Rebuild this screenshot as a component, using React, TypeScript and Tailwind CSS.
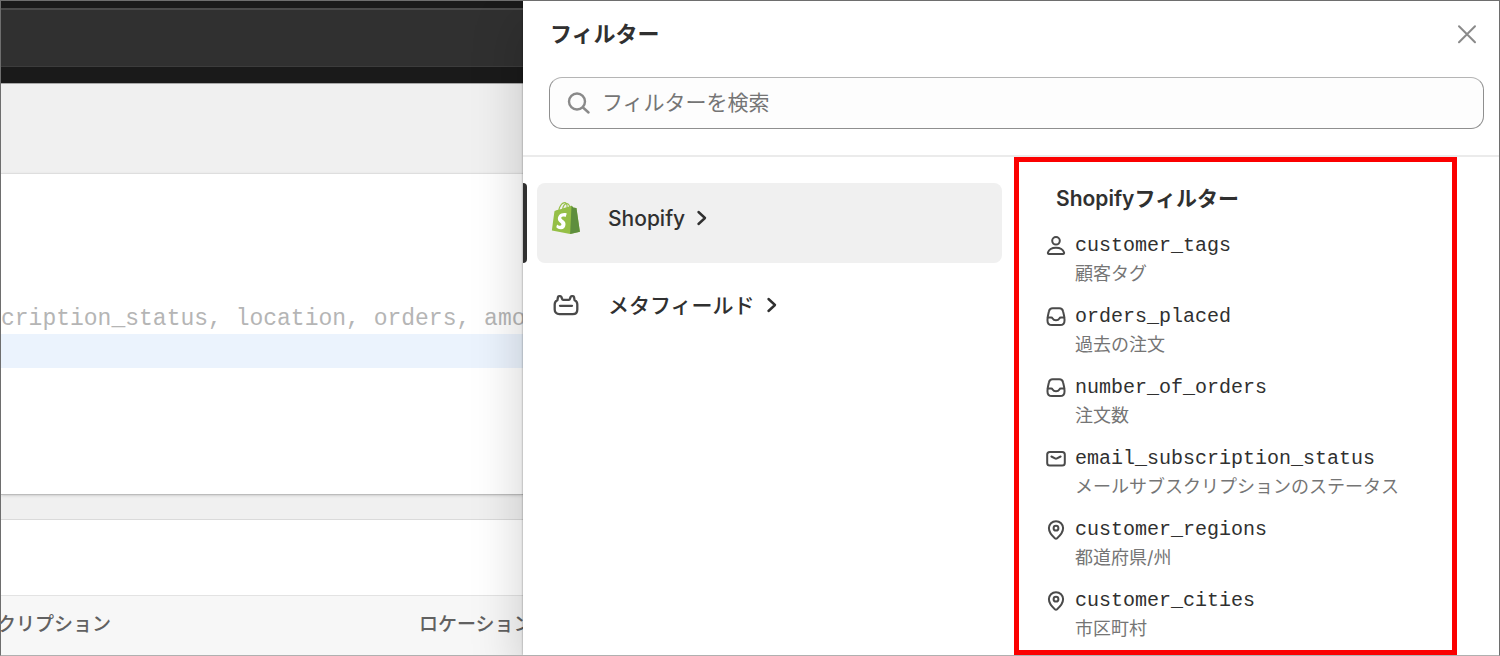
import type { ReactNode } from "react";

type IconProps = { className?: string };

function StrokeIcon({ className, children }: { className?: string; children: ReactNode }) {
  return (
    <svg
      viewBox="0 0 20 20"
      fill="none"
      stroke="currentColor"
      strokeWidth={2}
      strokeLinecap="round"
      strokeLinejoin="round"
      aria-hidden="true"
      className={className}
    >
      {children}
    </svg>
  );
}

function PersonIcon({ className }: IconProps) {
  return (
    <StrokeIcon className={className}>
      <circle cx="10" cy="4.800" r="3.800" />
      <path d="M1.900 16.600c1-3.200 4.300-4.900 8.100-4.900s7.100 1.700 8.100 4.900c.2.700-.3 1.300-1 1.300H2.900c-.7 0-1.200-.6-1-1.300Z" />
    </StrokeIcon>
  );
}

function InboxIcon({ className }: IconProps) {
  return (
    <StrokeIcon className={className}>
      <path d="M6.600 1.300h6.800c1.800 0 3.200 1.100 3.600 2.900.9 3.500 1.500 5.600 1.500 8v1.500c0 2.700-1.900 4.400-4.500 4.400H6c-2.600 0-4.500-1.700-4.500-4.400v-1.500c0-2.400.6-4.500 1.500-8 .4-1.800 1.800-2.900 3.600-2.900Z" />
      <path d="M1.800 10.600h3.500c.6 0 1 .3 1.300.8.7 1.200 1.900 1.900 3.400 1.900s2.700-.7 3.400-1.900c.3-.5.7-.8 1.300-.8h3.500" />
    </StrokeIcon>
  );
}

function MailIcon({ className }: IconProps) {
  return (
    <StrokeIcon className={className}>
      <rect x="1.200" y="3" width="17.600" height="13.600" rx="2.600" />
      <path d="M5.400 7.500 9 9.400c.6.300 1.400.300 2 0l3.600-1.900" />
    </StrokeIcon>
  );
}

function PinIcon({ className }: IconProps) {
  return (
    <StrokeIcon className={className}>
      <path d="M10 1.200c-4 0-7.100 3-7.100 6.900 0 4.300 3.300 7.900 6.200 10.300.5.500 1.300.500 1.800 0 2.900-2.400 6.200-6 6.200-10.300 0-3.900-3.100-6.900-7.100-6.900Z" />
      <circle cx="10" cy="8.200" r="2.400" />
    </StrokeIcon>
  );
}

function SearchIcon({ className }: IconProps) {
  return (
    <svg viewBox="0 0 24 24" fill="none" stroke="currentColor" strokeWidth={2.4} strokeLinecap="round" aria-hidden="true" className={className}>
      <circle cx="11" cy="10.500" r="8" />
      <path d="m17 16.500 5.500 5" />
    </svg>
  );
}

function CloseIcon({ className }: IconProps) {
  return (
    <svg viewBox="0 0 20 20" fill="none" stroke="currentColor" strokeWidth={2} strokeLinecap="round" aria-hidden="true" className={className}>
      <path d="m2 2.300 16 16M18 2.300 2 18.300" />
    </svg>
  );
}

function ChevronIcon({ className }: IconProps) {
  return (
    <svg viewBox="0 0 12 18" fill="none" stroke="currentColor" strokeWidth={2.4} strokeLinecap="round" strokeLinejoin="round" aria-hidden="true" className={className}>
      <path d="m2.500 3 6.500 6-6.500 6" />
    </svg>
  );
}

function MetafieldIcon({ className }: IconProps) {
  return (
    <svg viewBox="0 0 32 32" fill="none" stroke="currentColor" strokeWidth={2.3} strokeLinecap="round" strokeLinejoin="round" aria-hidden="true" className={className}>
      <path d="M7.400 11.200 8 8c.1-.5.500-.8 1-.8h1.300c.5 0 .9.3 1.100.8l.8 2.200c.1.400.5.600.9.600h5.800c.4 0 .8-.2.9-.6l.8-2.200c.2-.5.600-.8 1.100-.8H23c.5 0 .9.300 1 .8l.6 3.200c1.700.7 2.700 2.300 2.700 4.200v5c0 2.800-1.800 4.700-4.600 4.700H9.300c-2.800 0-4.600-1.900-4.600-4.700v-5c0-1.900 1-3.500 2.700-4.200Z" />
      <path d="M10 16.800h12" />
    </svg>
  );
}

function ShopifyLogo({ className }: IconProps) {
  return (
    <svg viewBox="0 0 256 292" aria-hidden="true" className={className}>
      <path
        fill="#95BF46"
        d="M223.774 57.34c-.201-1.46-1.48-2.268-2.537-2.357-1.055-.088-23.383-1.743-23.383-1.743s-15.507-15.395-17.209-17.099c-1.703-1.703-5.029-1.185-6.32-.805-.19.056-3.388 1.043-8.678 2.68-5.18-14.906-14.322-28.604-30.405-28.604-.444 0-.901.018-1.358.044C129.31 3.407 123.644.779 118.75.779c-37.465 0-55.364 46.835-60.976 70.635-14.558 4.511-24.9 7.718-26.221 8.133-8.126 2.549-8.383 2.805-9.45 10.462C21.3 95.806.038 260.235.038 260.235l165.678 31.042 89.77-19.42S223.973 58.8 223.775 57.34zM156.49 40.848l-14.019 4.339c.005-.988.01-1.96.01-3.023 0-9.264-1.286-16.723-3.349-22.636 8.287 1.04 13.806 10.469 17.358 21.32zm-27.638-19.483c2.304 5.773 3.802 14.058 3.802 25.238 0 .572-.005 1.095-.01 1.624-9.117 2.824-19.024 5.89-28.953 8.966 5.575-21.516 16.025-31.908 25.161-35.828zm-11.131-10.537c1.617 0 3.246.549 4.805 1.622-12.007 5.65-24.877 19.88-30.312 48.297l-22.886 7.088C75.694 46.16 90.81 10.828 117.72 10.828z"
      />
      <path
        fill="#5E8E3E"
        d="M221.237 54.983c-1.055-.088-23.383-1.743-23.383-1.743s-15.507-15.395-17.209-17.099c-.637-.634-1.496-.959-2.394-1.099l-12.527 256.233 89.762-19.418S223.972 58.8 223.774 57.34c-.201-1.46-1.48-2.268-2.537-2.357"
      />
      <path
        fill="#FFF"
        d="M135.242 104.585l-11.069 32.926s-9.698-5.176-21.586-5.176c-17.428 0-18.305 10.937-18.305 13.693 0 15.038 39.2 20.8 39.2 56.024 0 27.713-17.577 45.558-41.277 45.558-28.44 0-42.984-17.7-42.984-17.7l7.615-25.16s14.95 12.835 27.565 12.835c8.243 0 11.596-6.49 11.596-11.232 0-19.616-32.16-20.491-32.16-52.724 0-27.129 19.472-53.382 58.778-53.382 15.145 0 22.627 4.338 22.627 4.338"
      />
    </svg>
  );
}

const categories = [
  { id: "shopify", label: "Shopify", Icon: ShopifyLogo, active: true },
  { id: "metafields", label: "メタフィールド", Icon: MetafieldIcon, active: false },
];

const filters = [
  { name: "customer_tags", description: "顧客タグ", Icon: PersonIcon },
  { name: "orders_placed", description: "過去の注文", Icon: InboxIcon },
  { name: "number_of_orders", description: "注文数", Icon: InboxIcon },
  { name: "email_subscription_status", description: "メールサブスクリプションのステータス", Icon: MailIcon },
  { name: "customer_regions", description: "都道府県/州", Icon: PinIcon },
  { name: "customer_cities", description: "市区町村", Icon: PinIcon },
];

function SegmentPage() {
  return (
    <div className="flex min-w-0 flex-col overflow-hidden bg-[#f0f0f0]">
      <div className="border-b border-[#a8a8a8] bg-[#1a1a1a] pt-[7px] pb-4">
        <div className="h-[59px] border-t-2 border-b border-t-[#4a4a4a] border-b-[#3c3c3c] bg-[#303030]" />
      </div>

      <div className="mt-[89px] border-t border-b border-t-[#dedede] border-b-[#bcbcbc] bg-white pt-[130px] pb-[126px] shadow-sm">
        <code className="block whitespace-nowrap font-['Liberation_Mono',monospace] text-[23px] leading-[30px] text-[#b5b5b5]">
          cription_status, location, orders, amount
        </code>
        <div className="h-[34px] bg-[#ebf3fd]" />
      </div>

      <div className="mt-6 flex flex-1 flex-col border-t border-[#dadada] bg-white pt-[75px]">
        <div className="flex-1 border-t border-[#e3e3e3] bg-[#f7f7f7]">
          <table className="-ml-1 w-[640px] table-fixed text-left text-[19px] leading-7 text-[#616161]">
            <thead>
              <tr>
                <th className="w-[422px] pt-[15px] font-medium">クリプション</th>
                <th className="pt-[15px] font-medium">ロケーション</th>
              </tr>
            </thead>
          </table>
        </div>
      </div>
    </div>
  );
}

function FilterDrawer() {
  return (
    <aside className="relative z-10 flex min-w-0 flex-col bg-white shadow-[-2px_20px_48px_rgba(0,0,0,0.18),0_0_2px_rgba(0,0,0,0.4)]">
      <header className="border-b-2 border-[#ebebeb] pt-[17px] pr-[15px] pb-[26px] pl-[26px]">
        <div className="flex items-center justify-between pr-[7px] pl-px">
          <h2 className="text-[22px] leading-8 font-bold">フィルター</h2>
          <button type="button" aria-label="閉じる" className="text-[#8a8a8a]">
            <CloseIcon className="size-5" />
          </button>
        </div>
        <label className="mt-[27px] flex h-[52px] items-center gap-3 rounded-[13px] border border-[#8f8f8f] border-t-[#b5b5b5] bg-[#fdfdfd] px-4">
          <SearchIcon className="size-6 shrink-0 text-[#8a8a8a]" />
          <input
            type="text"
            aria-label="フィルターを検索"
            placeholder="フィルターを検索"
            className="min-w-0 flex-1 bg-transparent text-[21px] leading-8 outline-none placeholder:text-[#757575]"
          />
        </label>
      </header>

      <div className="grid flex-1 grid-cols-[491fr_443fr] pr-[42px]">
        <nav className="flex flex-col gap-[7px] pt-[26px] pr-3 pl-[14px]">
          {categories.map(({ id, label, Icon, active }) => (
            <div key={id} className="relative">
              {active ? <span className="absolute inset-y-0 -left-[14px] w-1 rounded-r-sm bg-[#303030]" /> : null}
              <button
                type="button"
                className={`flex h-20 w-full items-start rounded-lg pt-[19px] pl-[13px] text-left ${active ? "bg-[#f0f0f0]" : ""}`}
              >
                <Icon className="size-8 text-[#4a4a4a]" />
                <span className="ml-[26px] text-[21px] leading-[34px] font-medium">{label}</span>
                <ChevronIcon className="mt-[7px] ml-[11px] h-[18px] w-3" />
              </button>
            </div>
          ))}
        </nav>

        <section className="border-[5px] border-[#fb0000] pt-[23px] pb-[7px] pl-[27px]">
          <h3 className="pl-[10px] text-[21px] leading-7 font-semibold">Shopifyフィルター</h3>
          <ul className="mt-[19px] flex flex-col gap-[15px]">
            {filters.map(({ name, description, Icon }) => (
              <li key={name}>
                <button type="button" className="block text-left">
                  <span className="flex items-center gap-[9px]">
                    <Icon className="size-5 text-[#4a4a4a]" />
                    <code className="font-['Liberation_Mono',monospace] text-[20px] leading-7">{name}</code>
                  </span>
                  <span className="block pl-[29px] text-[18px] leading-7 whitespace-nowrap text-[#757575]">
                    {description}
                  </span>
                </button>
              </li>
            ))}
          </ul>
        </section>
      </div>
    </aside>
  );
}

export default function App() {
  return (
    <div className="grid min-h-screen grid-cols-[522fr_976fr] overflow-hidden border border-[#6e6e6e] border-b-[#b0b0b0] bg-white font-['Inter','Noto_Sans_CJK_JP',sans-serif] text-[#303030]">
      <SegmentPage />
      <FilterDrawer />
    </div>
  );
}
